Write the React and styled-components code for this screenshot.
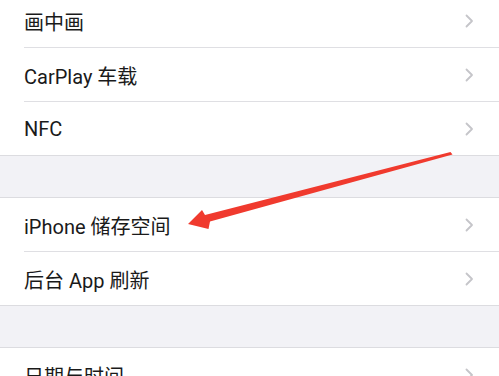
import React from "react";
import styled, { createGlobalStyle } from "styled-components";

const Global = createGlobalStyle`
  html, body { margin: 0; padding: 0; background: #f2f2f6; overflow: hidden; }
  body { font-family: "Roboto", "Noto Sans CJK SC", sans-serif; }
`;

const Page = styled.div`
  position: relative;
  width: 499px;
  height: 376px;
  overflow: hidden;
  background: #f2f2f6;
`;

const Sections = styled.div`
  display: flex;
  flex-direction: column;
  gap: 41px;
  margin-top: ${(p) => p.$offset}px;
`;

const Section = styled.div`
  background: #fff;
  border-top: 1px solid ${(p) => (p.$noTop ? "transparent" : "#dcdce0")};
  border-bottom: 1px solid #dcdce0;
`;

const Row = styled.div`
  display: flex;
  align-items: center;
  height: 53px;
  padding-left: 24px;
  position: relative;
  &:not(:last-child)::after {
    content: "";
    position: absolute;
    left: 24px;
    right: 0;
    bottom: -1px;
    height: 1px;
    background: #dfdfe3;
  }
  &:not(:last-child) {
    margin-bottom: 1px;
  }
`;

const Label = styled.span`
  flex: 1;
  font-size: 20px;
  color: #1a1a1a;
  padding-top: 1px;
`;

const Chevron = styled.svg`
  width: 9px;
  height: 14px;
  margin-right: 25px;
  flex: none;
`;

const Arrow = styled.svg`
  position: absolute;
  left: 0;
  top: 0;
  width: 499px;
  height: 376px;
  pointer-events: none;
`;

const ChevronIcon = () => (
  <Chevron viewBox="0 0 9 14">
    <path d="M1.5 1.5 L7 7 L1.5 12.5" fill="none" stroke="#c5c5c9" strokeWidth="1.8" strokeLinecap="round" strokeLinejoin="round" />
  </Chevron>
);

const sections = [
  ["画中画", "CarPlay 车载", "NFC"],
  ["iPhone 储存空间", "后台 App 刷新"],
  ["日期与时间"],
];

export default function App() {
  return (
    <Page>
      <Global />
      <Sections $offset={-7}>
        {sections.map((rows, i) => (
          <Section key={i} $noTop={i === 0}>
            {rows.map((r) => (
              <Row key={r}>
                <Label>{r}</Label>
                <ChevronIcon />
              </Row>
            ))}
          </Section>
        ))}
      </Sections>
      <Arrow viewBox="0 0 499 376">
        <path
          d="M450.5 152 L452.5 154.5 L210 221.5 L208.5 229 L188 224 L202 210 L205 215 Z"
          fill="#f03a2e"
        />
      </Arrow>
    </Page>
  );
}
